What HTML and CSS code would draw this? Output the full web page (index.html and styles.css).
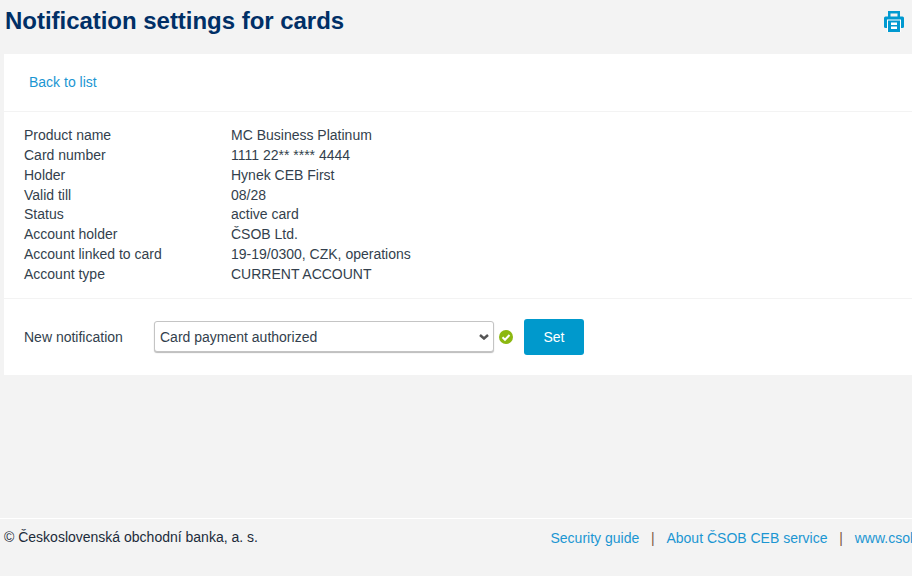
FILE: index.html
```html
<!DOCTYPE html>
<html lang="en">
<head>
<meta charset="utf-8">
<title>Notification settings for cards</title>
<link rel="stylesheet" href="styles.css">
</head>
<body>
<div class="page">
  <header class="head">
    <h1>Notification settings for cards</h1>
    <a class="print" href="#" aria-label="Print">
      <svg viewBox="0 0 20 21" width="20" height="21"><path fill="#0099d0" d="M4 0h12v6h-2.500V2.500h-7V6H4z"/><rect fill="#0099d0" y="5.500" width="20" height="11.500" rx="1.500"/><rect fill="#fff" x="3" y="8.500" width="14" height="12.500"/><path fill="#0099d0" fill-rule="evenodd" d="M4 9.500h12V21H4z M7 11.500v2.500h6v-2.500z M7 15.500v2.500h6v-2.500z"/></svg>
    </a>
  </header>
  <main class="card">
    <div class="back"><a href="#">Back to list</a></div>
    <dl class="details">
      <dt>Product name</dt><dd>MC Business Platinum</dd>
      <dt>Card number</dt><dd>1111 22** **** 4444</dd>
      <dt>Holder</dt><dd>Hynek CEB First</dd>
      <dt>Valid till</dt><dd>08/28</dd>
      <dt>Status</dt><dd>active card</dd>
      <dt>Account holder</dt><dd>ČSOB Ltd.</dd>
      <dt>Account linked to card</dt><dd>19-19/0300, CZK, operations</dd>
      <dt>Account type</dt><dd>CURRENT ACCOUNT</dd>
    </dl>
    <form class="notif">
      <label for="n">New notification</label>
      <div class="select-wrap">
        <select id="n"><option>Card payment authorized</option></select>
        <svg class="chev" viewBox="0 0 10 6" width="10" height="6"><path d="M1 1l4 3.500L9 1" fill="none" stroke="#555" stroke-width="2.500"/></svg>
      </div>
      <svg class="ok" viewBox="0 0 14 14" width="14" height="14"><circle cx="7" cy="7" r="7" fill="#8cb811"/><path d="M3.500 7.200l2.500 2.500 4.500-4.700" fill="none" stroke="#fff" stroke-width="2"/></svg>
      <button type="button">Set</button>
    </form>
  </main>
  <footer class="foot">
    <span class="copy">© Československá obchodní banka, a. s.</span>
    <nav class="links">
      <a href="#">Security guide</a><span class="sep">|</span><a href="#">About ČSOB CEB service</a><span class="sep">|</span><a href="#">www.csob.cz</a>
    </nav>
  </footer>
</div>
</body>
</html>
```
FILE: styles.css
```css
html, body { margin: 0; padding: 0; height: 100%; overflow: hidden; }
body { background: #f3f3f3; font-family: "Liberation Sans", Arial, sans-serif; font-size: 14px; line-height: 19.85px; color: #333f4d; }
a { color: #1b96d2; text-decoration: none; }
.page { width: 1000px; padding-left: 4px; }
.head { display: flex; justify-content: space-between; height: 54px; width: 900px; }
h1 { margin: 7px 0 0 1px; font-size: 24px; line-height: 28px; font-weight: 700; color: #002f66; letter-spacing: -0.03px; }
.print { margin-top: 11px; width: 20px; height: 21px; }
.card { background: #fff; height: 321px; }
.back { height: 58px; box-sizing: border-box; padding: 19px 0 0 25px; border-bottom: 1px solid #f3f3f3; }
.details { display: grid; grid-template-columns: 207px 1fr; margin: 0; padding: 14px 0 13px 20px; border-bottom: 1px solid #f3f3f3; }
.details dt, .details dd { margin: 0; }
.notif { display: flex; align-items: center; padding: 20px 0 0 20px; height: 36px; }
.notif label { width: 130px; margin-top: 2px; }
.select-wrap { position: relative; display: flex; }
.notif select { appearance: none; width: 340px; height: 31px; box-sizing: border-box; font: 14px "Liberation Sans", Arial, sans-serif; color: #333f4d; background: #fff; border: 1px solid #c4c4c4; border-radius: 3px; box-shadow: 0 1px 1px #bbb; padding-left: 5px; }
.chev { position: absolute; right: 5px; top: 13px; pointer-events: none; }
.ok { margin-left: 5px; }
.notif button { margin-left: 11px; width: 60px; height: 36px; border: 0; border-radius: 3px; background: #0099cc; color: #fff; font: 14px "Liberation Sans", Arial, sans-serif; }
.foot { margin: 143px 0 0 -4px; padding: 10px 0 0 4px; border-top: 1px solid #fff; display: flex; width: 996px; }
.copy { color: #1c2b3a; width: 546.500px; margin-top: -1px; }
.links { white-space: nowrap; }
.sep { margin: 0 11.800px; color: #7a5a40; }
```
